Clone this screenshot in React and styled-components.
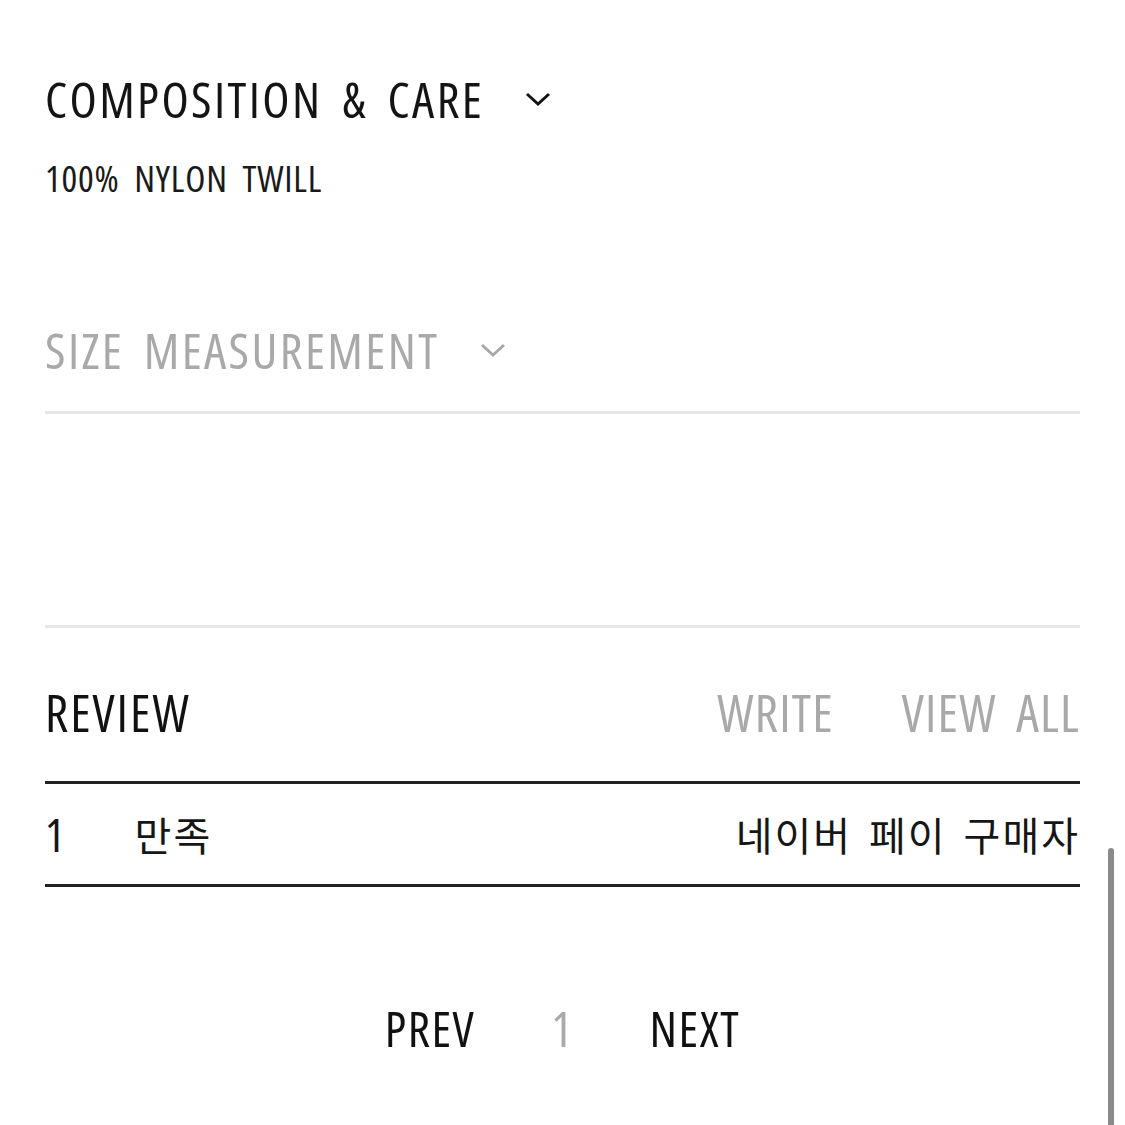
import React from 'react'
import styled, { createGlobalStyle } from 'styled-components'

const GlobalStyle = createGlobalStyle`
  html, body {
    margin: 0;
    padding: 0;
    background: #fff;
  }
  body {
    font-family: "Open Sans", "Liberation Sans", "Noto Sans CJK KR", sans-serif;
    font-stretch: 75%;
    color: #111;
  }
`

const Page = styled.div`
  position: relative;
  width: 1125px;
  height: 1125px;
  overflow: hidden;
  box-sizing: border-box;
  padding: 71px 45px 0 45px;
`

const Section = styled.section`
  display: flex;
  flex-direction: column;
`

const ToggleTitle = styled.div`
  display: flex;
  align-items: center;
  gap: 40px;
  font-size: 50px;
  line-height: 56px;
  letter-spacing: 2.4px;
  word-spacing: 8px;
  color: ${p => (p.$muted ? '#a9a9a9' : '#141414')};
`

const Chevron = ({ color }) => (
  <svg width="28" height="18" viewBox="0 0 28 18">
    <path d="M3 4 L14 14 L25 4" fill="none" stroke={color} strokeWidth="3" />
  </svg>
)

const Body = styled.p`
  margin: 29px 0 0;
  font-size: 37px;
  line-height: 44px;
  letter-spacing: 0.8px;
  word-spacing: 7px;
  color: #1a1a1a;
`

const Divider = styled.hr`
  margin: 0;
  border: none;
  border-top: 3px solid #e6e6e6;
`

const Review = styled.div`
  display: flex;
  justify-content: space-between;
  align-items: center;
  font-size: 51px;
  line-height: 60px;
  letter-spacing: 2px;
`

const ReviewLinks = styled.div`
  display: flex;
  gap: 68px;
  color: #a9a9a9;
  letter-spacing: 1.2px;
  word-spacing: 9px;
`

const Row = styled.div`
  display: flex;
  align-items: center;
  justify-content: space-between;
  height: 100px;
  border-top: 3px solid #222;
  border-bottom: 3px solid #222;
  font-family: "Noto Sans CJK KR", sans-serif;
  font-size: 40px;
  letter-spacing: 2px;
  word-spacing: 6px;
  color: #161616;
`

const RowLeft = styled.div`
  display: flex;
  align-items: center;
  gap: 68px;
`

const Num = styled.span`
  font-family: "Open Sans", "Liberation Sans", sans-serif;
  font-stretch: 75%;
  font-size: 46px;
`

const Pager = styled.div`
  display: flex;
  justify-content: center;
  align-items: center;
  gap: 76px;
  font-size: 49px;
  letter-spacing: 1.5px;
`

const PageNum = styled.span`
  color: #aaa;
`

const Scrollbar = styled.div`
  position: absolute;
  right: 11px;
  top: 848px;
  width: 6px;
  height: 290px;
  border-radius: 3px;
  background: #8a8a8a;
`

export default function App() {
  return (
    <>
      <GlobalStyle />
      <Page>
        <Section>
          <ToggleTitle>
            COMPOSITION & CARE <Chevron color="#141414" />
          </ToggleTitle>
          <Body>100% NYLON TWILL</Body>
        </Section>
        <Section style={{ marginTop: 122 }}>
          <ToggleTitle $muted>
            SIZE MEASUREMENT <Chevron color="#a9a9a9" />
          </ToggleTitle>
        </Section>
        <Divider style={{ marginTop: 33 }} />
        <Divider style={{ marginTop: 211 }} />
        <Review style={{ marginTop: 54 }}>
          <span>REVIEW</span>
          <ReviewLinks>
            <span>WRITE</span>
            <span>VIEW ALL</span>
          </ReviewLinks>
        </Review>
        <Row style={{ marginTop: 39 }}>
          <RowLeft>
            <Num>1</Num>
            <span>만족</span>
          </RowLeft>
          <span>네이버 페이 구매자</span>
        </Row>
        <Pager style={{ marginTop: 108 }}>
          <span>PREV</span>
          <PageNum>1</PageNum>
          <span>NEXT</span>
        </Pager>
        <Scrollbar />
      </Page>
    </>
  )
}
